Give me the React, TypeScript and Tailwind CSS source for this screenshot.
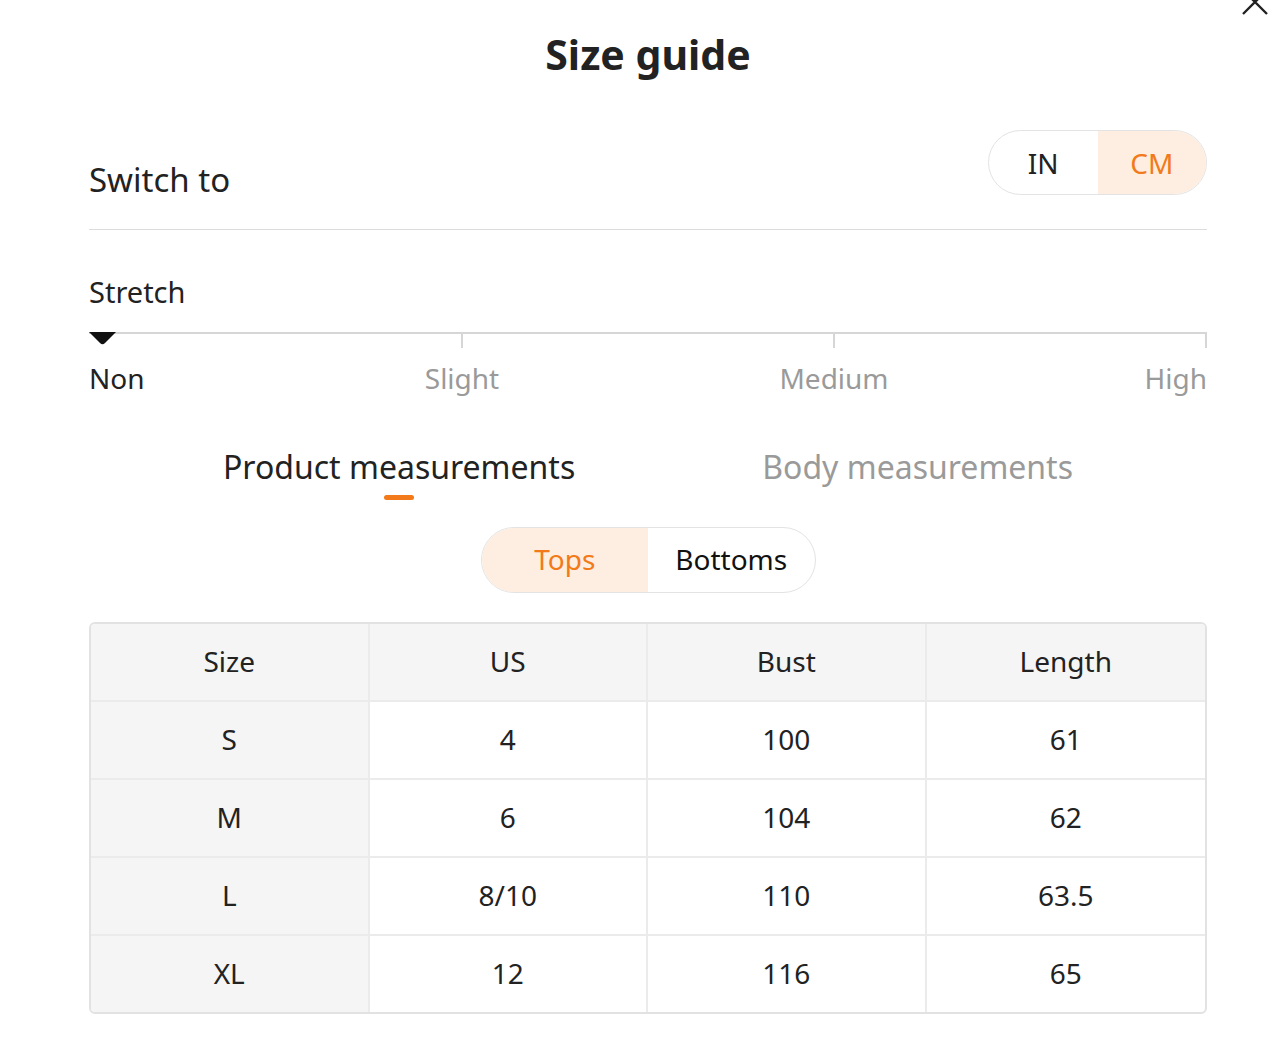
import React from 'react'

const rows = [
  ['S', '4', '100', '61'],
  ['M', '6', '104', '62'],
  ['L', '8/10', '110', '63.5'],
  ['XL', '12', '116', '65'],
]

const headers = ['Size', 'US', 'Bust', 'Length']

export default function App() {
  return (
    <div className="relative min-h-[1057px] w-[1274px] bg-white text-[#222] font-['Noto_Sans',sans-serif]">
      {/* Close */}
      <button className="absolute right-[5px] top-[-12px] h-[28px] w-[28px]">
        <svg viewBox="0 0 28 28" className="h-[28px] w-[28px]" fill="none" stroke="#222" strokeWidth="2.4">
          <path d="M2 2 L26 26 M26 2 L2 26" />
        </svg>
      </button>

      <h1 className="pl-[22px] pt-[26px] text-center text-[41px] font-bold leading-[56px] text-[#222]">Size guide</h1>

      <div className="mx-[89px] w-[1118px]">
        {/* Unit switch */}
        <div className="mt-[48px] flex items-end justify-between border-b border-[#dcdcdc] pb-[34px]">
          <span className="translate-y-[5px] text-[33px] leading-[40px]">Switch to</span>
          <div className="flex h-[65px] w-[219px] overflow-hidden rounded-full border border-[#e3e3e3] text-[28px]">
            <div className="flex flex-1 items-center justify-center text-[#222]">IN</div>
            <div className="flex flex-1 items-center justify-center bg-[#fdeee1] text-[#f27a1a]">CM</div>
          </div>
        </div>

        {/* Stretch */}
        <div className="mt-[42px] text-[29px] leading-[40px]">Stretch</div>
        <div className="relative mt-[20px] h-[16px] border-t-2 border-[#d6d6d6]">
          <div className="absolute left-[372px] top-0 h-[14px] w-[2px] bg-[#d6d6d6]" />
          <div className="absolute left-[744px] top-0 h-[14px] w-[2px] bg-[#d6d6d6]" />
          <div className="absolute right-0 top-0 h-[14px] w-[2px] bg-[#d6d6d6]" />
          <svg className="absolute left-0 top-[-2px]" width="27" height="14" viewBox="0 0 27 14">
            <path d="M0 0 H27 L16 11 Q13.5 13.5 11 11 Z" fill="#111" />
          </svg>
        </div>
        <div className="relative mt-[10px] h-[40px] text-[28px] leading-[40px]">
          <span className="absolute left-0 text-[#222]">Non</span>
          <span className="absolute left-[373px] -translate-x-1/2 text-[#9a9a9a]">Slight</span>
          <span className="absolute left-[745px] -translate-x-1/2 text-[#9a9a9a]">Medium</span>
          <span className="absolute right-0 text-[#9a9a9a]">High</span>
        </div>

        {/* Tabs */}
        <div className="mt-[47px] flex justify-center gap-[187px] text-[32px] leading-[44px]">
          <div className="flex flex-col items-center">
            <span className="text-[#222]">Product measurements</span>
            <span className="mt-[6px] h-[5px] w-[30px] rounded-full bg-[#f27a1a]" />
          </div>
          <div className="flex flex-col items-center">
            <span className="text-[#9a9a9a]">Body measurements</span>
          </div>
        </div>

        {/* Tops / Bottoms */}
        <div className="mt-[27px] flex justify-center">
          <div className="flex h-[66px] w-[335px] overflow-hidden rounded-full border border-[#e3e3e3] text-[28px]">
            <div className="flex flex-1 items-center justify-center bg-[#fdeee1] pb-[2px] text-[#f27a1a]">Tops</div>
            <div className="flex flex-1 items-center justify-center pb-[2px] text-[#111]">Bottoms</div>
          </div>
        </div>

        {/* Table */}
        <div className="mt-[29px] overflow-hidden rounded-[6px] border-2 border-[#e2e2e2] text-[28px]">
          <div className="grid grid-cols-4 bg-[#f5f5f5]">
            {headers.map((h, i) => (
              <div
                key={h}
                className={`flex h-[76px] items-center justify-center pb-[3px] ${i < 3 ? 'border-r-2 border-[#ebebeb]' : ''}`}
              >
                {h}
              </div>
            ))}
          </div>
          {rows.map((r) => (
            <div key={r[0]} className="grid grid-cols-4 border-t-2 border-[#ebebeb]">
              {r.map((c, i) => (
                <div
                  key={i}
                  className={`flex h-[76px] items-center justify-center pb-[3px] ${i === 0 ? 'bg-[#f5f5f5]' : ''} ${i < 3 ? 'border-r-2 border-[#ebebeb]' : ''}`}
                >
                  {c}
                </div>
              ))}
            </div>
          ))}
        </div>
      </div>
    </div>
  )
}
